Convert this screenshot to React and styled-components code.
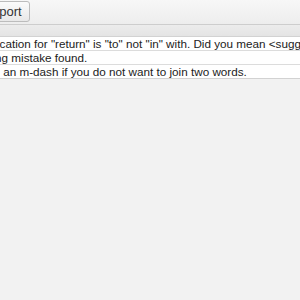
import React from "react";
import styled, { createGlobalStyle } from "styled-components";

const Global = createGlobalStyle`
  html, body { margin: 0; padding: 0; background: #f2f2f2; }
  body { font-family: "Liberation Sans", Arial, sans-serif; font-size: 12px; color: #222; }
`;

const Page = styled.div`
  width: 300px;
  height: 300px;
  overflow: hidden;
  background: #f2f2f2;
`;

const Toolbar = styled.div`
  height: 24px;
  display: flex;
  align-items: center;
  background: linear-gradient(#f7f7f7, #ededed);
  border-bottom: 1px solid #cdcdcd;
  overflow: hidden;
`;

const Button = styled.button`
  margin-left: -22px;
  margin-top: -1px;
  height: 21px;
  padding: 0 7px 0 5px;
  font: inherit;
  font-size: 13px;
  color: #333;
  background: linear-gradient(#fbfbfb, #e8e8e8);
  border: 1px solid #bcbcbc;
  border-radius: 3px;
`;

const Header = styled.div`
  height: 11px;
  background: linear-gradient(#ececec, #e4e4e4);
  border-bottom: 1px solid #d2d2d2;
`;

const List = styled.div`
  background: #fff;
  overflow: hidden;
  border-bottom: 1px solid #d2d2d2;
`;

const Row = styled.div`
  height: 13px;
  line-height: 13px;
  font-size: 11.7px;
  white-space: nowrap;
  margin-left: ${(p) => p.$shift}px;
  border-bottom: 1px solid #dcdcdc;
  &:last-child { border-bottom: none; }
`;

const messages = [
  { t: 'The usual collocation for "return" is "to" not "in" with. Did you mean <suggestion>return to</suggestion>?', s: -79 },
  { t: "Possible spelling mistake found.", s: -79 },
  { t: "Consider using an m-dash if you do not want to join two words.", s: -78 },
];

export default function App() {
  return (
    <Page>
      <Global />
      <Toolbar>
        <Button>Export</Button>
      </Toolbar>
      <Header />
      <List>
        {messages.map((m) => (
          <Row key={m.t} $shift={m.s}>{m.t}</Row>
        ))}
      </List>
    </Page>
  );
}
